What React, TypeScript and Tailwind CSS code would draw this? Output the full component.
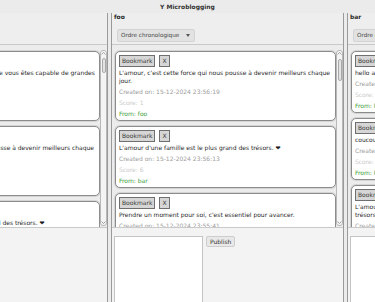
import React from "react";

type Post = {
  text: string;
  created: string;
  score: number;
  from: string;
};

const Chevron = ({ up }: { up: boolean }) => (
  <svg width="5" height="3" viewBox="0 0 5 3" className="shrink-0">
    <path
      d={up ? "M0.5 2.5 L2.5 0.5 L4.5 2.5" : "M0.5 0.5 L2.5 2.5 L4.5 0.5"}
      fill="none"
      stroke="#8a8a8a"
      strokeWidth="0.8"
    />
  </svg>
);

function Card({ post }: { post: Post }) {
  return (
    <div className="w-[221px] shrink-0 bg-white border border-[#8c8c8c] rounded-[5px] shadow-[0_0_0_1px_#d4d4d4] pl-[3px] pr-[3px] pt-[3px] pb-[1px]">
      <div className="flex gap-[4px]">
        <div className="h-[12px] px-[2px] bg-[#d6d6d6] border border-[#6f6f6f] text-[#3a3a3a] leading-[10px]">
          Bookmark
        </div>
        <div className="h-[12px] px-[2px] bg-[#d6d6d6] border border-[#6f6f6f] text-[#3a3a3a] leading-[10px]">
          X
        </div>
      </div>
      <div className="leading-[8px] py-[1.5px] text-[#1f1f1f]">{post.text}</div>
      <div className="leading-[11px] text-[#9c9c9c]">Created on: {post.created}</div>
      <div className="leading-[11px] text-[#cacaca]">Score: {post.score}</div>
      <div className="leading-[11px] text-[#3d9e3d]">From: {post.from}</div>
    </div>
  );
}

function Scrollbar({ thumbTop, thumbH }: { thumbTop: number; thumbH: number }) {
  return (
    <div className="w-[7px] shrink-0 mt-[5px] mb-[1px] bg-[#f4f4f4] border border-[#b8b8b8] rounded-[3px] flex flex-col items-center pt-[1px] pb-[1px]">
      <Chevron up />
      <div
        className="w-[4px] rounded-[2px] bg-[#e4e4e4] border border-[#a9a9a9]"
        style={{ marginTop: thumbTop, height: thumbH }}
      />
      <div className="flex-1" />
      <Chevron up={false} />
    </div>
  );
}

function Column({
  name,
  posts,
  thumbTop,
  thumbH,
}: {
  name: string;
  posts: Post[];
  thumbTop: number;
  thumbH: number;
}) {
  return (
    <div className="w-[233px] shrink-0 h-full border-x border-[#9a9a9a] bg-[#eeeeee] flex flex-col">
      <div className="h-[31px] shrink-0 flex flex-col">
        <div className="pl-[2px] leading-[8px] font-bold text-[#2a2a2a]">{name}</div>
        <div className="ml-[5px] mt-[8px] w-[78px] h-[13px] bg-[#e2e2e2] border border-[#d3d3d3] rounded-[2px] flex items-center justify-between pl-[3px] pr-[4px] text-[#444] text-[5.7px]">
          <span>Ordre chronologique</span>
          <svg width="4" height="3" viewBox="0 0 4 3">
            <path d="M0 0 L4 0 L2 3 Z" fill="#555" />
          </svg>
        </div>
      </div>
      <div className="h-[184px] shrink-0 border-y border-[#c9c9c9] bg-[#ececec] flex overflow-hidden">
        <div className="pl-[3px] pt-[6px] flex flex-col gap-[5px] overflow-hidden">
          {posts.map((p, i) => (
            <Card key={i} post={p} />
          ))}
        </div>
        <Scrollbar thumbTop={thumbTop} thumbH={thumbH} />
      </div>
      <div className="flex-1 bg-[#f3f3f3] flex items-start pl-[2px] pt-[8px] overflow-hidden">
        <div className="w-[89px] h-[80px] bg-white border border-[#c4c4c4] shrink-0" />
        <div className="ml-[3px] h-[11px] px-[3px] bg-[#e8e8e8] border border-[#cdcdcd] rounded-[2px] leading-[9px] text-[#333]">
          Publish
        </div>
      </div>
    </div>
  );
}

const amour1 = "L'amour, c'est cette force qui nous pousse à devenir meilleurs chaque jour.";
const amour2 = "L'amour d'une famille est le plus grand des trésors. ❤";

const leftPosts: Post[] = [
  {
    text: "Crois toujours en toi et n'oublie pas que vous êtes capable de grandes choses.",
    created: "15-12-2024 23:56:25",
    score: 3,
    from: "bar",
  },
  { text: amour1, created: "15-12-2024 23:56:19", score: 1, from: "foo" },
  { text: amour2, created: "15-12-2024 23:56:13", score: 6, from: "bar" },
];

const midPosts: Post[] = [
  { text: amour1, created: "15-12-2024 23:56:19", score: 1, from: "foo" },
  { text: amour2, created: "15-12-2024 23:56:13", score: 6, from: "bar" },
  {
    text: "Prendre un moment pour soi, c'est essentiel pour avancer.",
    created: "15-12-2024 23:55:41",
    score: 2,
    from: "foo",
  },
];

const rightPosts: Post[] = [
  { text: "hello and welcome", created: "15-12-2024 23:57:02", score: 5, from: "lisa" },
  { text: "coucou", created: "15-12-2024 23:56:48", score: 0, from: "lisa" },
  {
    text: "L'amour de mes amis et de ma famille est pour moi le plus grand des trésors.",
    created: "15-12-2024 23:56:30",
    score: 4,
    from: "foo",
  },
];

export default function App() {
  return (
    <div className="w-[375px] h-[302px] overflow-hidden bg-[#ebebeb] font-['DejaVu_Sans',sans-serif] text-[6px] flex flex-col">
      <div className="h-[13px] shrink-0 flex items-center justify-center font-bold text-[#333]">
        Y Microblogging
      </div>
      <div className="flex-1 min-h-0 flex gap-[3px] ml-[-125px]">
        <Column name="baz" posts={leftPosts} thumbTop={3} thumbH={15} />
        <Column name="foo" posts={midPosts} thumbTop={4} thumbH={22} />
        <Column name="bar" posts={rightPosts} thumbTop={4} thumbH={30} />
      </div>
    </div>
  );
}
